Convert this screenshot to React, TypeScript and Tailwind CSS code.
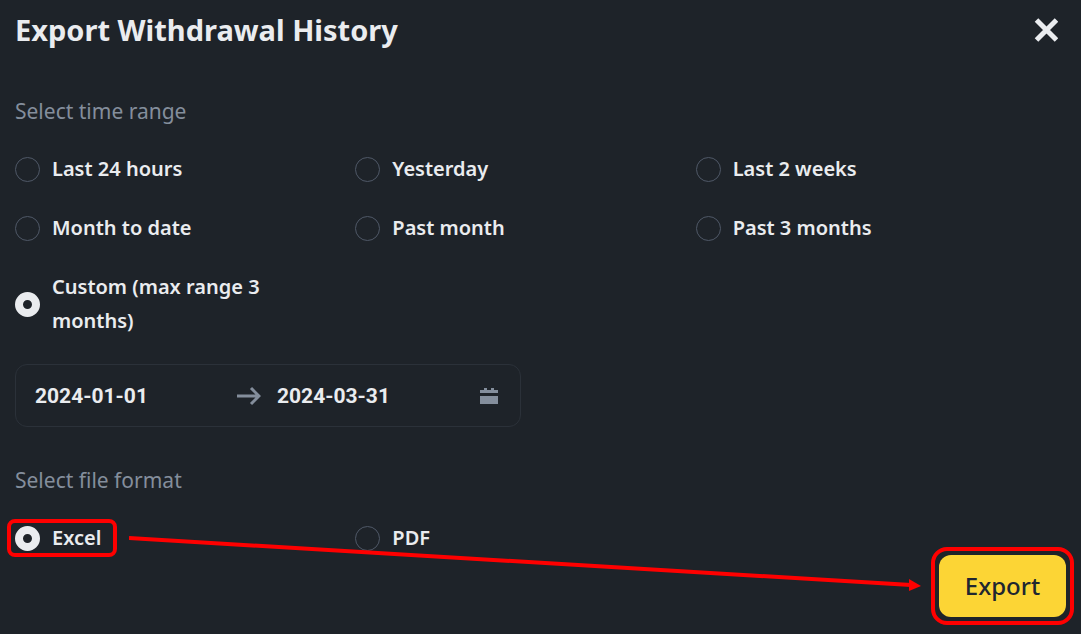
import React, { useState } from "react";

const timeRanges = [
  "Last 24 hours",
  "Yesterday",
  "Last 2 weeks",
  "Month to date",
  "Past month",
  "Past 3 months",
  "Custom (max range 3 months)",
];

interface RadioOptionProps {
  name: string;
  label: string;
  checked: boolean;
  onSelect: (label: string) => void;
  highlighted?: boolean;
}

const RadioOption: React.FC<RadioOptionProps> = ({
  name,
  label,
  checked,
  onSelect,
  highlighted = false,
}) => {
  return (
    <div className="pr-8">
      <label className="relative flex w-fit cursor-pointer items-center gap-3">
        <input
          type="radio"
          name={name}
          checked={checked}
          onChange={() => onSelect(label)}
          className="size-[25px] shrink-0 appearance-none rounded-full border border-[#4f5867] checked:border-8 checked:border-[#eaecef] checked:bg-[#1e2329]"
        />
        <span className="text-xl leading-[34px] font-semibold text-[#eaecef]">
          {label}
        </span>
        {highlighted && (
          <span className="pointer-events-none absolute -inset-y-0.5 -right-4 -left-2 rounded-lg border-4 border-[#ff0000]" />
        )}
      </label>
    </div>
  );
};

const CalendarIcon = () => (
  <svg width="18" height="18" viewBox="0 0 18 18" fill="#848e9c" aria-hidden="true">
    <path d="M0 3h4V1h3v2h4V1h3v2h4v3H0zM0 9h18v8H0z" />
  </svg>
);

const App: React.FC = () => {
  const [range, setRange] = useState("Custom (max range 3 months)");
  const [fileFormat, setFileFormat] = useState("Excel");
  const [from, setFrom] = useState("2024-01-01");
  const [to, setTo] = useState("2024-03-31");

  return (
    <main className="relative min-h-screen bg-[#1e2329] px-[15px] pt-[10px] pb-[17px] font-['Noto_Sans',sans-serif] text-[21px] leading-[34px]">
      <header className="flex items-center justify-between">
        <h1 className="text-[29px] leading-10 font-bold text-[#eaecef]">
          Export Withdrawal History
        </h1>
        <button type="button" aria-label="Close" className="mr-2 cursor-pointer">
          <svg width="24" height="24" viewBox="0 0 24 24" fill="none" aria-hidden="true">
            <path d="M2.5 2l20 20M22.5 2l-20 20" stroke="#eaecef" strokeWidth="5" />
          </svg>
        </button>
      </header>

      <fieldset className="mt-11">
        <legend className="text-[#848e9c]">Select time range</legend>
        <div className="mt-6 mr-[30px] grid grid-cols-3 gap-y-[25px]">
          {timeRanges.map((label) => (
            <RadioOption
              key={label}
              name="range"
              label={label}
              checked={range === label}
              onSelect={setRange}
            />
          ))}
        </div>
      </fieldset>

      <div className="mt-[26px] flex h-[63px] w-full max-w-[506px] items-center rounded-xl border border-[#2b3139] px-[19px] font-['Roboto',sans-serif] text-[21px] font-bold text-[#eaecef]">
        <input
          type="text"
          aria-label="Start date"
          value={from}
          onChange={(e) => setFrom(e.target.value)}
          className="w-[200px] min-w-0 bg-transparent outline-none"
        />
        <svg width="26" height="22" viewBox="0 0 26 22" fill="none" className="shrink-0" aria-hidden="true">
          <path d="M2 11h22M16 3l8 8-8 8" stroke="#848e9c" strokeWidth="3" />
        </svg>
        <input
          type="text"
          aria-label="End date"
          value={to}
          onChange={(e) => setTo(e.target.value)}
          className="ml-4 min-w-0 flex-1 bg-transparent outline-none"
        />
        <button type="button" aria-label="Open calendar" className="mr-[3px] cursor-pointer">
          <CalendarIcon />
        </button>
      </div>

      <fieldset className="mt-9">
        <legend className="text-[#848e9c]">Select file format</legend>
        <div className="mt-6 mr-[30px] grid grid-cols-3">
          {["Excel", "PDF"].map((label) => (
            <RadioOption
              key={label}
              name="format"
              label={label}
              checked={fileFormat === label}
              onSelect={setFileFormat}
              highlighted={label === "Excel"}
            />
          ))}
        </div>
      </fieldset>

      <footer className="flex justify-end">
        <button
          type="button"
          className="relative h-[62px] w-[127px] cursor-pointer rounded-xl bg-[#fcd535] text-2xl font-medium text-[#202630]"
        >
          Export
          <span className="pointer-events-none absolute -inset-2 rounded-2xl border-4 border-[#ff0000]" />
        </button>
      </footer>

      <svg
        width="792"
        height="60"
        viewBox="0 0 792 60"
        className="pointer-events-none absolute right-[160px] bottom-[42px]"
        aria-hidden="true"
      >
        <path d="M0 6L782 53" stroke="#ff0000" strokeWidth="4" />
        <path d="M780 47l12 7-12 5z" fill="#ff0000" />
      </svg>
    </main>
  );
};

export default App;
